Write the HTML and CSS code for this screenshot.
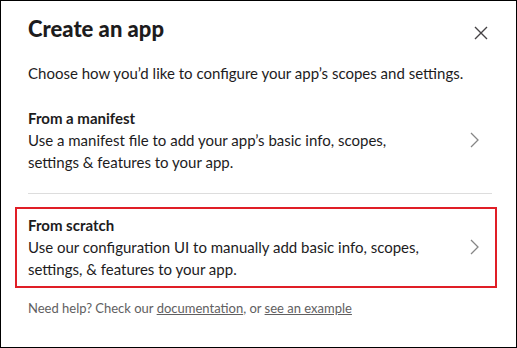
FILE: index.html
```html
<!DOCTYPE html>
<html lang="en">
  <head>
    <meta charset="UTF-8" />
    <meta name="viewport" content="width=device-width, initial-scale=1.0" />
    <title>Create an app</title>

    <link rel="stylesheet" href="styles.css">
  </head>
  <body>
    <div class="modal">
      <div class="modal-header">
        <h1 class="modal-title">Create an app</h1>
        <button class="close-btn" aria-label="Close">
          <svg width="14" height="14" viewBox="0 0 14 14">
            <path d="M1 1 L13 13 M13 1 L1 13" stroke="#454245" stroke-width="1.4" fill="none" />
          </svg>
        </button>
      </div>

      <p class="intro">Choose how you’d like to configure your app’s scopes and settings.</p>

      <div class="options">
        <a class="option" href="#">
          <div class="option-text">
            <b>From a manifest</b>
            <span>Use a manifest file to add your app’s basic info, scopes, settings &amp; features to your app.</span>
          </div>
          <svg class="chevron" width="9" height="16" viewBox="0 0 9 16">
            <path d="M1 1 L8 8 L1 15" stroke="#868686" stroke-width="1.3" fill="none" />
          </svg>
        </a>

        <a class="option highlighted" href="#">
          <div class="option-text">
            <b>From scratch</b>
            <span>Use our configuration UI to manually add basic info, scopes, settings, &amp; features to your app.</span>
          </div>
          <svg class="chevron" width="9" height="16" viewBox="0 0 9 16">
            <path d="M1 1 L8 8 L1 15" stroke="#868686" stroke-width="1.3" fill="none" />
          </svg>
        </a>
      </div>

      <p class="help">
        Need help? Check our <a href="#">documentation</a>, or <a href="#">see an example</a>
      </p>
    </div>
  </body>
</html>
```

FILE: styles.css
```css
body {
  margin: 0;
  font-family: Lato, "Noto Sans", sans-serif;
  color: #1d1c1d;
  background: #fff;
}

.modal {
  width: 517px;
  height: 348px;
  box-sizing: border-box;
  border: 1px solid #000;
  padding: 13px 24px 0 27px;
  background: #fff;
}

.modal-header {
  display: flex;
  justify-content: space-between;
  align-items: flex-start;
}

.modal-title {
  margin: 0;
  font-size: 22px;
  line-height: 30px;
  font-weight: 900;
}

.close-btn {
  width: 22px;
  height: 22px;
  margin-top: 8px;
  padding: 0;
  border: none;
  background: none;
  display: flex;
  align-items: center;
  justify-content: center;
  cursor: pointer;
}

.intro {
  margin: 18px 0 3px;
  font-size: 15px;
  line-height: 22px;
}

.option {
  position: relative;
  display: flex;
  align-items: center;
  justify-content: space-between;
  padding: 20px 0;
  color: inherit;
  text-decoration: none;
  font-size: 15px;
  line-height: 22px;
}

.option + .option {
  border-top: 1px solid #dddddd;
  padding-bottom: 19px;
}

.option-text {
  display: flex;
  flex-direction: column;
  max-width: 400px;
}

.option-text b {
  font-weight: 700;
}

.chevron {
  margin-right: 13px;
  flex-shrink: 0;
}

/* annotation box round the chosen option */
.option.highlighted::after {
  content: "";
  position: absolute;
  top: 13px;
  bottom: 11px;
  left: -13px;
  right: -5px;
  border: 2px solid #e01e26;
}

.help {
  margin: 0;
  font-size: 13px;
  line-height: 18px;
  color: #616061;
}

.help a {
  color: inherit;
  text-decoration: underline;
}
```
